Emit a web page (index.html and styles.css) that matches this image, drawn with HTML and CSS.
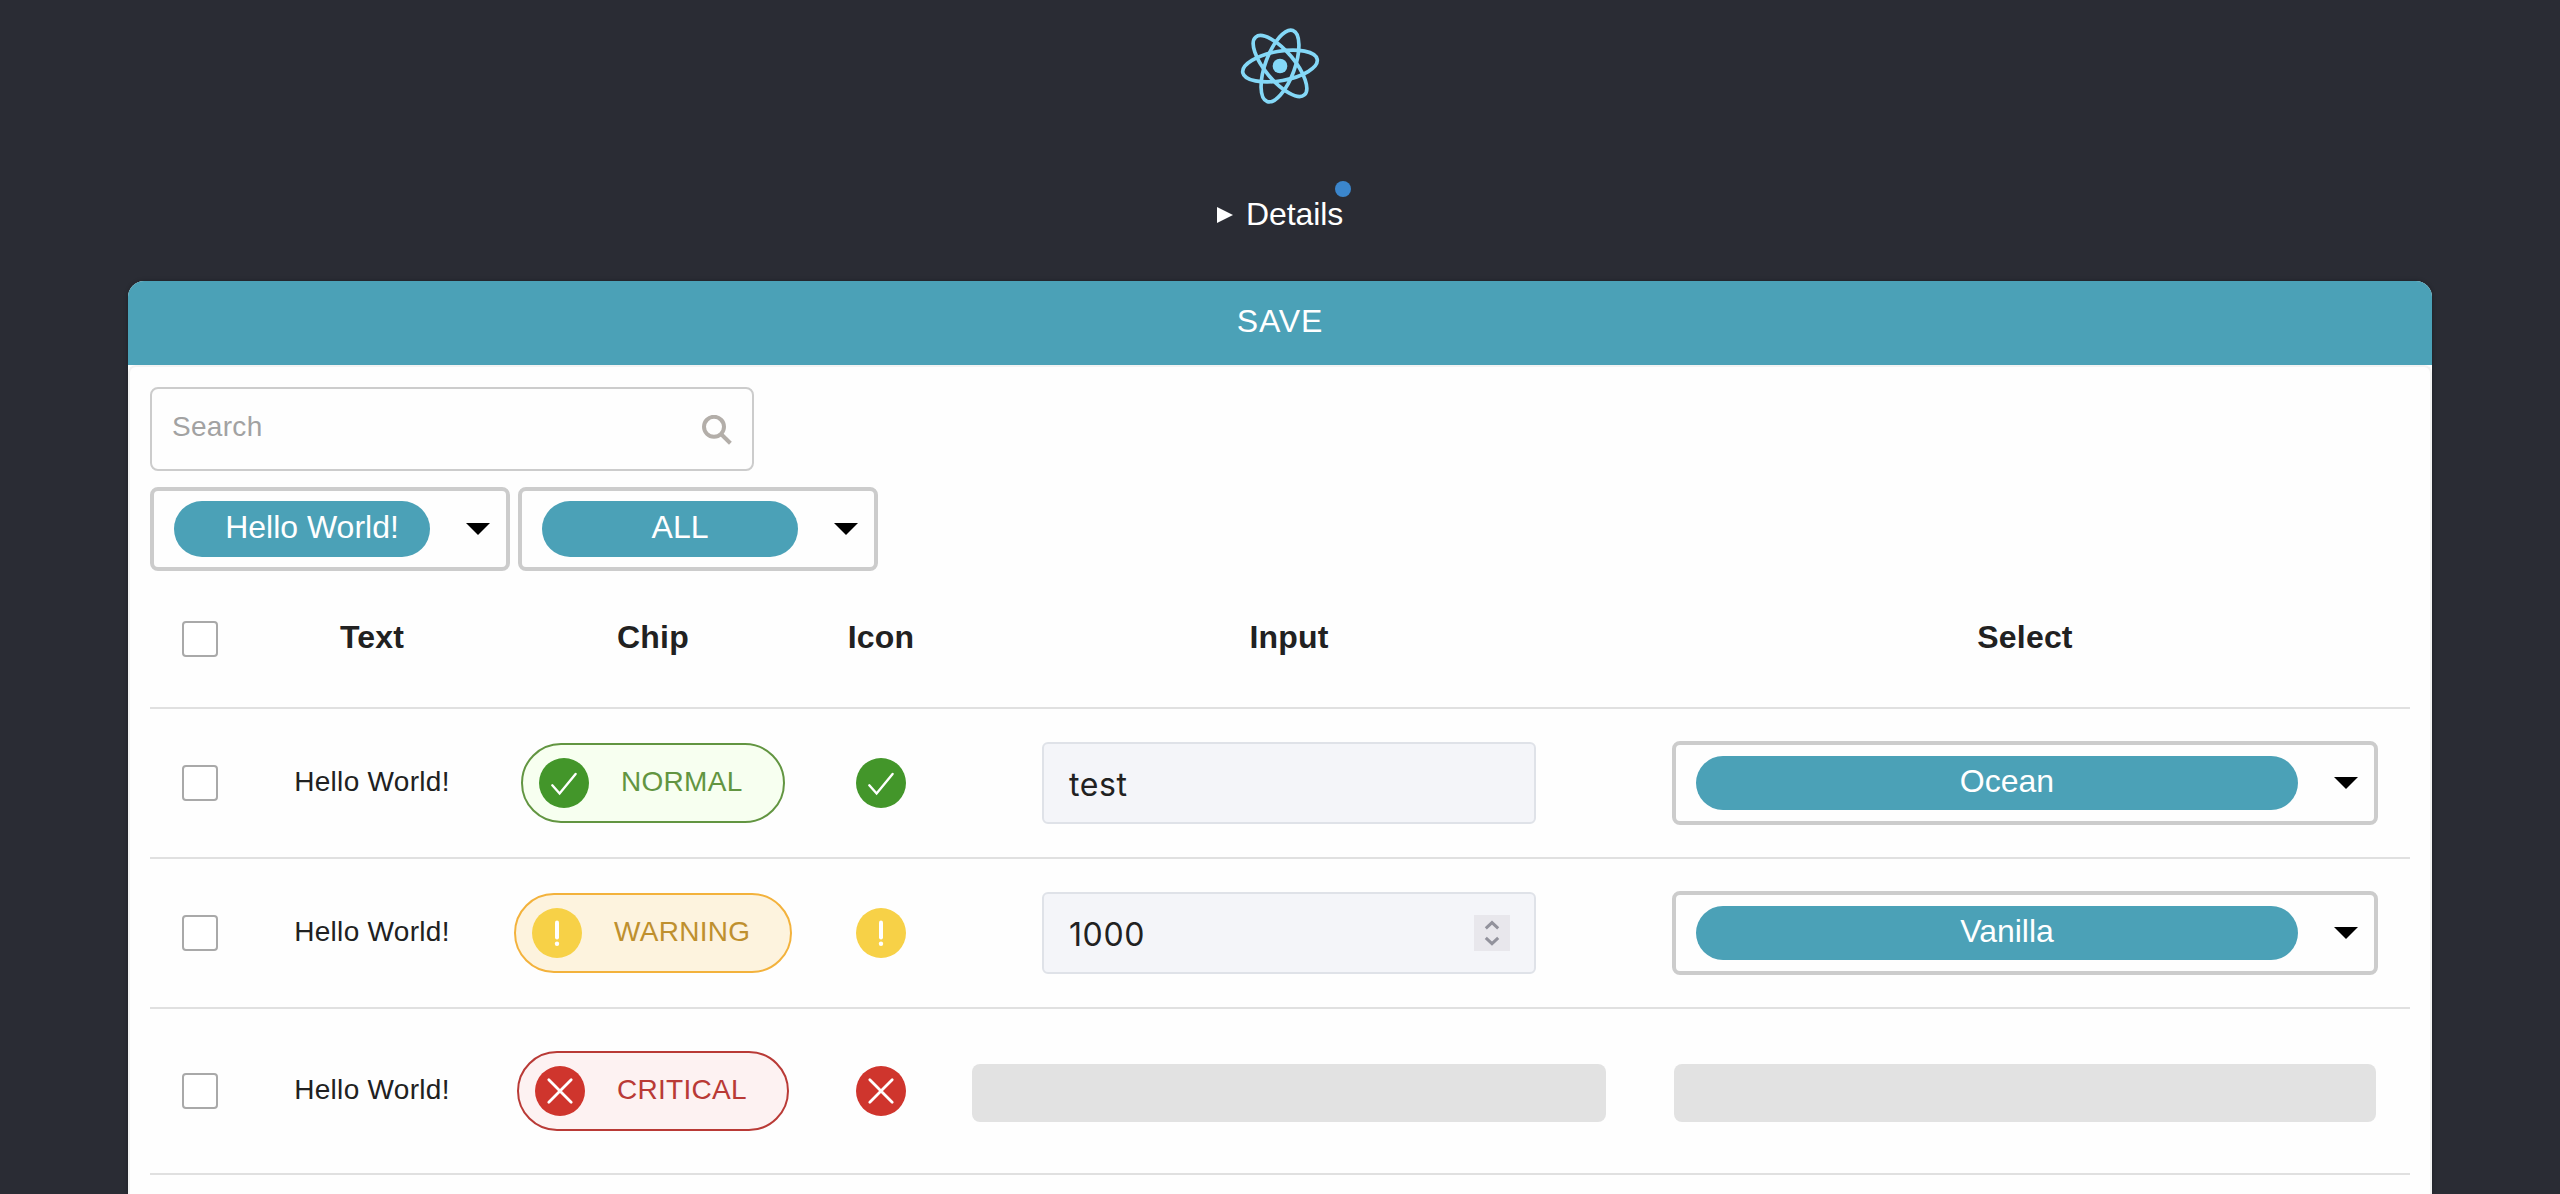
FILE: index.html
```
<!DOCTYPE html>
<html lang="en">
<head>
<meta charset="utf-8">
<title>Table</title>
<link rel="stylesheet" href="styles.css">
</head>
<body>
<svg class="defs" aria-hidden="true">
  <symbol id="ok" viewBox="0 0 50 50"><circle cx="25" cy="25" r="25" fill="#43962a"/><path d="M13.3 27.3 L20.6 35.5 L36.6 16" fill="none" stroke="#fff" stroke-width="2.4" stroke-linecap="round"/></symbol>
  <symbol id="warn" viewBox="0 0 50 50"><circle cx="25" cy="25" r="25" fill="#f7d147"/><path d="M25 14.6 V29.4" stroke="#fff" stroke-width="4" stroke-linecap="round"/><circle cx="25" cy="35.8" r="2.2" fill="#fff"/></symbol>
  <symbol id="crit" viewBox="0 0 50 50"><circle cx="25" cy="25" r="25" fill="#cf352d"/><path d="M13.8 13.8 L36.2 36.2 M36.2 13.8 L13.8 36.2" stroke="#fff" stroke-width="2.8" stroke-linecap="round"/></symbol>
</svg>
<header class="top">
  <svg class="logo" viewBox="-12 -12 24 24">
    <circle r="2.1" fill="#84d8f7"/>
    <g fill="none" stroke="#84d8f7" stroke-width="1.05" transform="rotate(-10)">
      <ellipse rx="10.8" ry="4.2"/><ellipse rx="10.8" ry="4.2" transform="rotate(60)"/><ellipse rx="10.8" ry="4.2" transform="rotate(120)"/>
    </g>
  </svg>
  <div class="details"><svg class="marker" viewBox="0 0 16 16"><path d="M0 0 L16 8 L0 16Z" fill="#fff"/></svg><span>Details</span><i class="dot"></i></div>
</header>
<main class="card">
  <div class="save">SAVE</div>
  <div class="body">
    <div class="search"><span>Search</span><svg viewBox="0 0 30 30"><circle cx="12" cy="11.8" r="10" fill="none" stroke="#b3aea9" stroke-width="4"/><path d="M19 19 L28.4 28.2" stroke="#b3aea9" stroke-width="4"/></svg></div>
    <div class="filters">
      <div class="select"><span class="pill">Hello World!</span><svg class="arrow" viewBox="0 0 24 12"><path d="M0 0H24L12 12Z"/></svg></div>
      <div class="select"><span class="pill">ALL</span><svg class="arrow" viewBox="0 0 24 12"><path d="M0 0H24L12 12Z"/></svg></div>
    </div>
    <div class="row head">
      <div class="check"><i class="box"></i></div><div>Text</div><div>Chip</div><div>Icon</div><div>Input</div><div>Select</div>
    </div>
    <div class="row">
      <div class="check"><i class="box"></i></div>
      <div class="text">Hello World!</div>
      <div><span class="chip normal"><svg class="icon"><use href="#ok"/></svg><span class="label">NORMAL</span></span></div>
      <div><svg class="icon"><use href="#ok"/></svg></div>
      <div><div class="input">test</div></div>
      <div><div class="select wide"><span class="pill">Ocean</span><svg class="arrow" viewBox="0 0 24 12"><path d="M0 0H24L12 12Z"/></svg></div></div>
    </div>
    <div class="row">
      <div class="check"><i class="box"></i></div>
      <div class="text">Hello World!</div>
      <div><span class="chip warning"><svg class="icon"><use href="#warn"/></svg><span class="label">WARNING</span></span></div>
      <div><svg class="icon"><use href="#warn"/></svg></div>
      <div><div class="input">1000<svg class="spinner" viewBox="0 0 36 36"><path d="M11.8 13.4 L18 7.6 L24.2 13.4 M11.8 22.8 L18 28.6 L24.2 22.8" fill="none" stroke="#92929c" stroke-width="3"/></svg></div></div>
      <div><div class="select wide"><span class="pill">Vanilla</span><svg class="arrow" viewBox="0 0 24 12"><path d="M0 0H24L12 12Z"/></svg></div></div>
    </div>
    <div class="row tall">
      <div class="check"><i class="box"></i></div>
      <div class="text">Hello World!</div>
      <div><span class="chip critical"><svg class="icon"><use href="#crit"/></svg><span class="label">CRITICAL</span></span></div>
      <div><svg class="icon"><use href="#crit"/></svg></div>
      <div class="pad"><div class="skeleton"></div></div>
      <div class="pad"><div class="skeleton"></div></div>
    </div>
  </div>
</main>
</body>
</html>
```
FILE: styles.css
```
* { box-sizing: border-box; }
body { margin: 0; height: 1194px; overflow: hidden; background: #2a2c34; font-family: "Liberation Sans", Arial, sans-serif; font-size: 32px; line-height: 36px; color: #212121; }
.defs { position: absolute; width: 0; height: 0; }
.top { height: 281px; display: flex; flex-direction: column; align-items: center; padding-top: 24px; color: #fff; }
.logo { width: 84px; height: 84px; }
.details { position: relative; margin-top: 88px; display: flex; align-items: center; gap: 13px; letter-spacing: -.1px; }
.marker { width: 16px; height: 16px; margin-top: 2px; }
.dot { position: absolute; right: -8px; top: -15px; width: 16px; height: 16px; border-radius: 50%; background: #3b86cc; }
.card { width: 2304px; height: 913px; margin: 0 auto; background: #fefefe; border-radius: 16px 16px 0 0; overflow: hidden; box-shadow: 0 0 4px rgba(0,0,0,.3); }
.save { height: 84px; background: #4ba1b7; color: #fff; display: flex; align-items: center; justify-content: center; padding-bottom: 4px; letter-spacing: .9px; }
.body { height: 829px; padding: 20px 20px 0; border: 2px solid #f3f3f3; border-bottom: 0; border-radius: 8px 8px 0 0; }
.search { width: 604px; height: 84px; border: 2px solid #ccc; border-radius: 8px; display: flex; align-items: center; justify-content: space-between; padding: 0 20px; color: #a2a2a2; font-size: 28px; letter-spacing: .3px; }
.search span { padding-bottom: 4px; }
.search svg { width: 30px; height: 30px; margin-top: 2px; }
.filters { display: flex; gap: 8px; margin-top: 16px; }
.select { width: 360px; height: 84px; border: 4px solid #ccc; border-radius: 8px; display: flex; align-items: center; justify-content: space-between; padding: 0 16px 0 20px; }
.pill { width: 256px; height: 56px; border-radius: 28px; background: #4ba1b7; color: #fff; text-align: center; line-height: 52px; padding-left: 20px; }
.arrow { width: 24px; height: 12px; }
.wide { width: 706px; }
.wide .pill { width: 602px; height: 54px; line-height: 51px; }
.row { display: grid; grid-template-columns: 112px 220px 342px 114px 702px 770px; height: 150px; border-bottom: 2px solid #e0e0e0; align-items: center; justify-items: center; }
.head { height: 138px; font-weight: 700; letter-spacing: .2px; }
.tall { height: 166px; }
.row > div { display: flex; justify-content: center; align-items: center; }
.head > div { padding-bottom: 4px; }
.row > .check { width: 100%; justify-content: flex-start; padding: 0 0 0 32px; }
.box { width: 36px; height: 36px; border: 2px solid #a9a9a9; border-radius: 4px; background: #fff; }
.text { font-size: 28px; letter-spacing: .3px; padding-bottom: 3px; white-space: nowrap; }
.icon { width: 50px; height: 50px; display: block; }
.chip { height: 80px; border: 2px solid; border-radius: 40px; display: flex; align-items: center; padding: 0 0 0 16px; gap: 32px; font-size: 28px; letter-spacing: .3px; }
.label { padding-bottom: 3px; }
.normal { color: #629541; border-color: #629541; background: #f7fff0; width: 264px; }
.warning { color: #bf902e; border-color: #f3b23c; background: #fdf3de; width: 278px; }
.critical { color: #b93a36; border-color: #b93a36; background: #fdf2f2; width: 272px; }
.input { width: 494px; height: 82px; border: 2px solid #dfe2e8; border-radius: 6px; background: #f4f5f9; padding: 4px 24px 0 25px; display: flex; align-items: center; justify-content: space-between; font-family: Inter, sans-serif; letter-spacing: .6px; }
.spinner { width: 36px; height: 36px; background: #e8e7ec; margin-top: -4px; }
.row > .pad { width: 100%; padding: 4px 34px 0; }
.skeleton { width: 100%; height: 58px; border-radius: 8px; background: #e2e2e2; }
```
